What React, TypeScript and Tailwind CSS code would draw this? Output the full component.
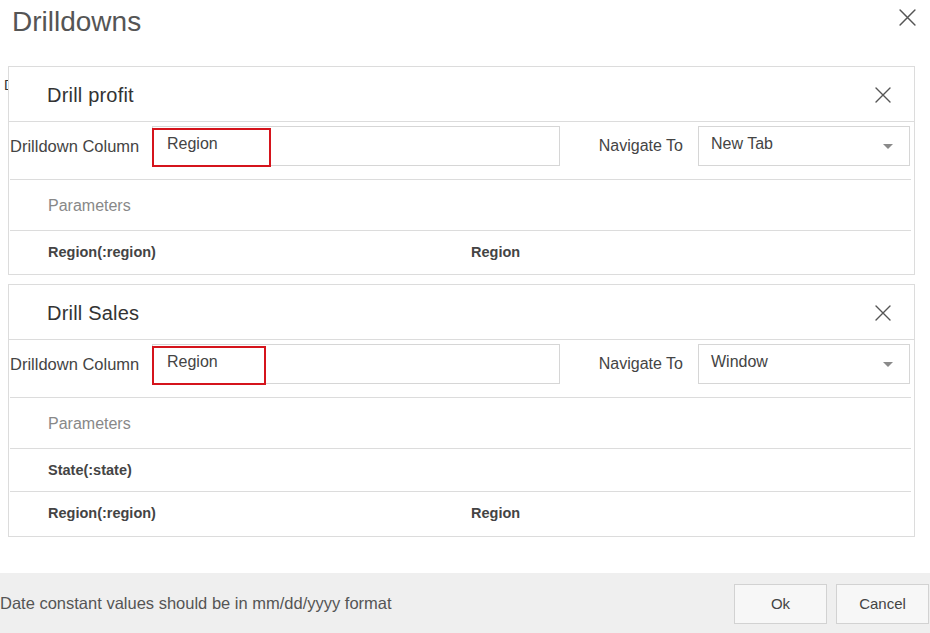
import React from "react";

type ParamRow = { name: string; value?: string };

interface Drilldown {
  title: string;
  column: string;
  navigate: string;
  redBoxWidth: string;
  params: ParamRow[];
  extraBottom?: boolean;
}

const DRILLDOWNS: Drilldown[] = [
  {
    title: "Drill profit",
    column: "Region",
    navigate: "New Tab",
    redBoxWidth: "w-[119px]",
    params: [{ name: "Region(:region)", value: "Region" }],
  },
  {
    title: "Drill Sales",
    column: "Region",
    navigate: "Window",
    redBoxWidth: "w-[114px]",
    params: [{ name: "State(:state)" }, { name: "Region(:region)", value: "Region" }],
    extraBottom: true,
  },
];

const CloseIcon = ({ size }: { size: number }) => (
  <svg width={size} height={size} viewBox="0 0 16 16" fill="none">
    <path d="M1 1 L15 15 M15 1 L1 15" stroke="#555" strokeWidth="1.4" strokeLinecap="round" />
  </svg>
);

const DrilldownPanel = ({ item }: { item: Drilldown }) => (
  <div className={`relative bg-white border border-[#dcdcdc] ${item.extraBottom ? "pb-[1px]" : ""}`}>
    <div className="flex items-center justify-between h-[55px] pt-[1px] border-b border-[#dcdcdc] pl-[38px] pr-[23px]">
      <span className="text-[20px] text-[#333] tracking-[0.2px]">{item.title}</span>
      <CloseIcon size={16} />
    </div>

    <div className="pl-[1px] pr-[3px]">
      <div className="flex items-start pt-[4px] h-[58px] border-b border-[#dcdcdc]">
        <span className="w-[142px] h-[40px] flex items-center text-[16.5px] text-[#444]">
          Drilldown Column
        </span>
        <div className="relative w-[408px] h-[40px] border border-[#d6d6d6] pl-[14px] pt-[7px] text-[16px] leading-[20px] text-[#444]">
          {item.column}
          {/* red annotation box */}
          <div
            className={`absolute -left-[1px] top-[1px] h-[39px] border-2 border-[#d5141c] ${item.redBoxWidth}`}
          />
        </div>
        <span className="w-[138px] h-[40px] flex items-center justify-end pr-[15px] text-[16px] text-[#444]">
          Navigate To
        </span>
        <div className="relative w-[212px] h-[40px] border border-[#d6d6d6] pl-[12px] pt-[7px] text-[16px] leading-[20px] text-[#444]">
          {item.navigate}
          <span className="absolute right-[16px] top-[17px] w-0 h-0 border-l-[5.5px] border-r-[5.5px] border-t-[5px] border-l-transparent border-r-transparent border-t-[#8a8a8a]" />
        </div>
      </div>

      <div className="flex items-center h-[51px] pt-[1px] border-b border-[#dcdcdc] pl-[38px] text-[16px] text-[#888]">
        Parameters
      </div>

      {item.params.map((p, i) => (
        <div
          key={p.name}
          className={`flex items-center h-[43px] pt-[1px] text-[14.5px] font-bold text-[#444] ${
            i < item.params.length - 1 ? "border-b border-[#dcdcdc]" : ""
          }`}
        >
          <span className="w-[461px] pl-[38px]">{p.name}</span>
          <span>{p.value}</span>
        </div>
      ))}
    </div>
  </div>
);

export default function App() {
  return (
    <div className="relative w-[930px] h-[633px] overflow-hidden bg-white flex flex-col font-['Liberation_Sans',Arial,sans-serif]">
      <div className="flex items-start justify-between h-[66px]">
        <h1 className="pl-[12px] text-[28px] leading-[44px] text-[#555]">Drilldowns</h1>
        <div className="pt-[9px] pr-[14px]">
          <CloseIcon size={17} />
        </div>
      </div>

      <div className="relative flex-1">
        {/* text hidden behind the panels */}
        <span className="absolute left-[4px] top-[9px] text-[14px] text-[#333]">D</span>
        <div className="relative flex flex-col gap-[9px] ml-[8px] w-[907px]">
          {DRILLDOWNS.map((d) => (
            <DrilldownPanel key={d.title} item={d} />
          ))}
        </div>
      </div>

      <div className="flex items-center justify-between h-[60px] bg-[#efefef] pr-[1px]">
        <span className="text-[16.5px] text-[#555]">
          Date constant values should be in mm/dd/yyyy format
        </span>
        <div className="flex gap-[9px] pt-[2px]">
          <button className="w-[93px] h-[40px] bg-[#f7f7f7] border border-[#d2d2d2] text-[15px] text-[#444]">
            Ok
          </button>
          <button className="w-[93px] h-[40px] bg-[#f7f7f7] border border-[#d2d2d2] text-[15px] text-[#444]">
            Cancel
          </button>
        </div>
      </div>
    </div>
  );
}
